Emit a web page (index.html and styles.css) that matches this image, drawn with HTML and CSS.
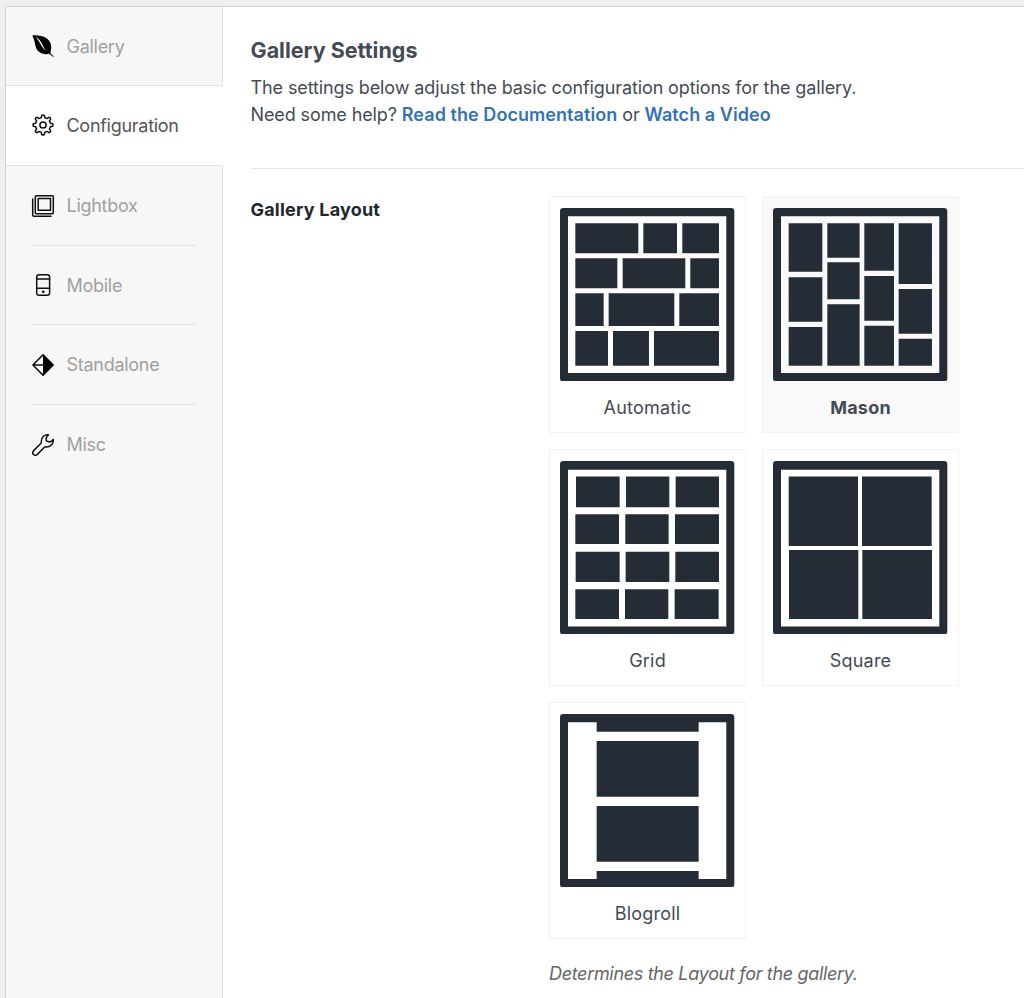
FILE: index.html
```html
<!DOCTYPE html>
<html lang="en">
<head>
<meta charset="utf-8">
<title>Gallery Settings</title>
<link rel="stylesheet" href="styles.css">
</head>
<body>
<div class="panel">
  <nav class="tabs">
    <a class="tab tab-first">
      <svg class="icon" viewBox="0 0 22 22"><path d="M0.2 .4C5 0 10.5.6 14.500 3.300C18.800 6.300 20 11 18.900 15.200L18.300 18.100L21.800 21.400L21.300 22L17.400 18.800C14 19.600 9.400 19.200 6.300 16.300C2.300 12.400 3.800 6.300.2.400Z"/><path class="vein" d="M3.200 2C9.800 4.200 9.700 11 14 15.400C8.800 12.900 8.400 6 3.200 2Z"/></svg>
      <span>Gallery</span></a>
    <a class="tab tab-active">
      <svg class="icon line" viewBox="0 0 22 22"><circle cx="11" cy="11" r="3.100"/><path d="M9.300 3.600L9.700 1.400Q11 .5 12.300 1.400L12.700 3.600L15 4.600L16.900 3.300Q18.600 3.500 18.700 5.100L17.400 7L18.400 9.300L20.600 9.700Q21.500 11 20.600 12.300L18.400 12.700L17.400 15L18.700 16.900Q18.500 18.600 16.900 18.700L15 17.400L12.700 18.400L12.300 20.600Q11 21.500 9.700 20.600L9.300 18.400L7 17.400L5.100 18.700Q3.400 18.500 3.300 16.900L4.600 15L3.600 12.700L1.400 12.300Q.5 11 1.400 9.700L3.600 9.300L4.600 7L3.300 5.100Q3.500 3.400 5.100 3.300L7 4.600Z"/></svg>
      <span>Configuration</span></a>
    <a class="tab">
      <svg class="icon line" viewBox="0 0 22 22"><rect x="3.300" y=".7" width="18" height="18" rx="1"/><rect x="6.200" y="3.500" width="12.300" height="11.800"/><path d="M.7 4V20Q.7 21.300 2 21.300H19"/></svg>
      <span>Lightbox</span></a>
    <a class="tab">
      <svg class="icon line" viewBox="0 0 22 22"><rect x="4.700" y=".7" width="12.900" height="20.600" rx="2.300"/><path d="M4.700 5H17.600M4.700 14.300H17.600"/><circle class="dot" cx="11.200" cy="17.800" r="1.300"/></svg>
      <span>Mobile</span></a>
    <a class="tab">
      <svg class="icon line" viewBox="0 0 22 22"><path d="M11 .9L.9 11L11 21.100L21.100 11ZM1 11H11"/><path class="solid" d="M11 .3L21.700 11L11 21.700Z"/></svg>
      <span>Standalone</span></a>
    <a class="tab tab-last">
      <svg class="icon line" viewBox="0 0 22 22"><path d="M16.600.9C12.900.1 9 3.300 9.400 7.200Q9.600 8.700 8.800 9.500L1.400 16.900C-.6 19.300 2.500 22.600 5.100 20.600L12.200 13.500Q13.100 12.700 14.500 12.900C18.800 13.200 22.200 9 21.200 5.300Q19.700 8.300 17 7.800L14.300 7Q13.900 4.500 14.500 3.500Q15 2 16.600.9Z"/></svg>
      <span>Misc</span></a>
  </nav>
  <main class="content">
    <header class="intro">
      <h2 class="title">Gallery Settings</h2>
      <p class="lead">The settings below adjust the basic configuration options for the gallery.</p>
      <p class="help">Need some help? <a>Read the Documentation</a> or <a>Watch a Video</a></p>
    </header>
    <section class="setting">
      <h3 class="setting-name">Gallery Layout</h3>
      <div class="setting-body">
        <div class="layouts">
          <div class="card">
            <svg class="thumb" viewBox="61 54 523 521" preserveAspectRatio="none"><path class="frame" fill-rule="evenodd" d="M71 54H574Q584 54 584 64V565Q584 575 574 575H71Q61 575 61 565V64Q61 54 71 54ZM85 79V549H560V79Z"/><path d="M107 100H296V190H107ZM311 100H412V190H311ZM428 100H538V190H428ZM107 205H233V295H107ZM249 205H437V295H249ZM452 205H538V295H452ZM107 310H192V408H107ZM207 310H404V408H207ZM419 310H538V408H419ZM107 423H205V527H107ZM220 423H328V527H220ZM343 423H538V527H343Z"/></svg>
            <span class="label">Automatic</span></div>
          <div class="card selected">
            <svg class="thumb" viewBox="56 54 523 521" preserveAspectRatio="none"><path class="frame" fill-rule="evenodd" d="M66 54H569Q579 54 579 64V565Q579 575 569 575H66Q56 575 56 565V64Q56 54 66 54ZM80 79V549H555V79Z"/><path d="M103 100H204V245H103ZM219 100H316V203H219ZM330 100H419V242H330ZM433 100H533V282H433ZM103 262H204V395H103ZM219 217H316V328H219ZM330 258H419V392H330ZM433 297H533V431H433ZM103 411H204V527H103ZM219 343H316V527H219ZM330 407H419V527H330ZM433 446H533V527H433Z"/></svg>
            <span class="label">Mason</span></div>
          <div class="card">
            <svg class="thumb" viewBox="61 61 523 523" preserveAspectRatio="none"><path class="frame" fill-rule="evenodd" d="M71 61H574Q584 61 584 71V574Q584 584 574 584H71Q61 584 61 574V71Q61 61 71 61ZM85 87V559H560V87Z"/><path d="M109 108H240V200H109ZM259 108H389V200H259ZM408 108H538V200H408ZM107 221H238V311H107ZM257 221H387V311H257ZM406 221H538V311H406ZM108 334H240V425H108ZM258 334H389V425H258ZM407 334H538V425H407ZM107 447H238V537H107ZM256 447H386V537H256ZM405 447H537V537H405Z"/></svg>
            <span class="label">Grid</span></div>
          <div class="card">
            <svg class="thumb" viewBox="56 61 523 523" preserveAspectRatio="none"><path class="frame" fill-rule="evenodd" d="M66 61H569Q579 61 579 71V574Q579 584 569 584H66Q56 584 56 574V71Q56 61 66 61ZM80 87V559H555V87Z"/><path d="M103 108H311V317H103ZM323 108H532V317H323ZM104 329H312V537H104ZM324 329H533V537H324Z"/></svg>
            <span class="label">Square</span></div>
          <div class="card">
            <svg class="thumb" viewBox="61 56 523 521" preserveAspectRatio="none"><path class="frame" fill-rule="evenodd" d="M71 56H574Q584 56 584 66V567Q584 577 574 577H71Q61 577 61 567V66Q61 56 71 56ZM85 81V551H171V527H477V551H560V81H477V109H171V81Z"/><path d="M171 137H477V304H171ZM171 332H477V499H171Z"/></svg>
            <span class="label">Blogroll</span></div>
        </div>
        <p class="note">Determines the Layout for the gallery.</p>
      </div>
    </section>
  </main>
</div>
</body>
</html>
```
FILE: styles.css
```css
* { box-sizing: border-box; }
body {
  margin: 0;
  height: 998px;
  padding: 6px 0 0 4.500px;
  overflow: hidden;
  background: #efefef;
  color: #444b54;
  font-family: Inter, "Liberation Sans", sans-serif;
  font-size: 18px;
}
h2, h3, p { margin: 0; }
.panel {
  display: flex;
  height: 992px;
  border: 1px solid #d2d2d2;
  border-width: 1px 0 0 1px;
  background: #fff;
}
.tabs {
  display: flex;
  flex-direction: column;
  flex: none;
  width: 217.500px;
  background: #f7f7f7;
}
.tabs::after { content: ""; flex: 1; border-right: 1px solid #e2e2e2; }
.tab {
  display: flex;
  flex: none;
  align-items: center;
  gap: 12.500px;
  position: relative;
  height: 79.700px;
  padding-left: 26.500px;
  color: #a0a0a0;
  letter-spacing: -.28px;
  border-right: 1px solid #e2e2e2;
}
.tab:not(.tab-first):not(.tab-active):not(.tab-last)::after {
  content: "";
  position: absolute;
  left: 26.500px;
  right: 26px;
  bottom: -.3px;
  height: 1px;
  background: #e1e1e1;
}
.tab-first { height: 79px; border-bottom: 1px solid #e2e2e2; }
.tab-active {
  background: #fff;
  color: #555;
  border-right-color: transparent;
  border-bottom: 1px solid #e2e2e2;
}
.icon { flex: none; width: 22px; height: 22px; fill: #000; overflow: visible; }
.line { fill: none; stroke: #111; stroke-width: 1.500; stroke-linejoin: round; stroke-linecap: round; }
.vein { fill: #f7f7f7; }
.dot, .solid { fill: #000; stroke: none; }

.content { flex: 1; min-width: 0; padding-left: 27.500px; }
.intro { height: 162px; padding-top: 30px; border-bottom: 1px solid #e2e2e2; }
.title { font-size: 21.500px; line-height: 27px; font-weight: 700; }
.lead, .help { line-height: 27px; white-space: nowrap; letter-spacing: -.11px; }
.lead { margin-top: 10px; }
.help a { color: #3173b5; font-weight: 600; letter-spacing: .06px; }
.setting { display: flex; padding-top: 27px; }
.setting-name {
  flex: none;
  width: 298.500px;
  color: #23282d;
  font-size: 18px;
  font-weight: 700;
  line-height: 27px;
  letter-spacing: .2px;
}
.layouts {
  display: grid;
  grid-template-columns: 197px 197px;
  gap: 16px;
}
.card {
  display: flex;
  flex-direction: column;
  align-items: center;
  height: 236.900px;
  padding-top: 10.800px;
  border: 1px solid #f2f2f2;
}
.selected { background: #f9f9f9; font-weight: 700; }
.thumb { width: 174.300px; height: 173.700px; fill: #242d36; }
.label { margin-top: 12.500px; line-height: 27px; letter-spacing: .22px; }
.note { margin-top: 21.700px; color: #666; font-style: italic; line-height: 27px; letter-spacing: -.32px; }
```
